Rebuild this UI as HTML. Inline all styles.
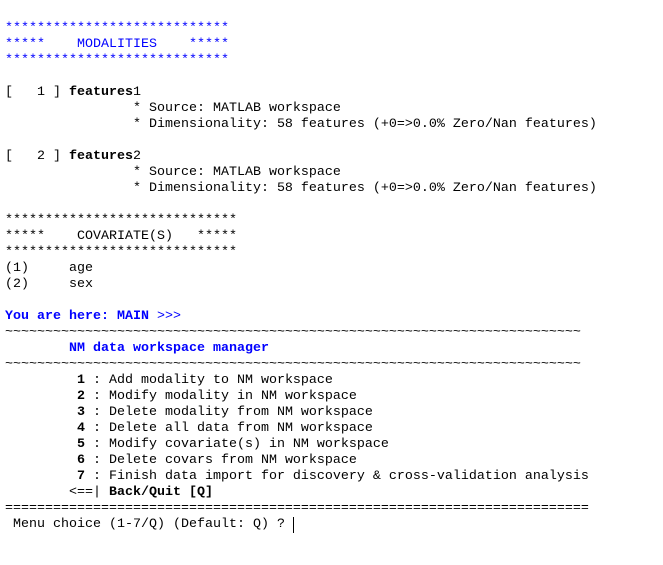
<!DOCTYPE html>
<html><head><style>
body{margin:0;background:#fff;width:663px;height:565px;overflow:hidden}
pre{position:absolute;left:5px;top:21px;margin:0;font-family:"Liberation Mono",monospace;font-size:13.33px;line-height:16px;color:#000}
.b{color:#00f}
b{font-weight:bold}
.cur{display:inline-block;width:1px;height:16px;background:#000;vertical-align:top}
</style></head><body>
<pre><span class="b">****************************
*****    MODALITIES    *****
****************************</span>

[   1 ] <b>features</b>1
                * Source: MATLAB workspace
                * Dimensionality: 58 features (+0=&gt;0.0% Zero/Nan features)

[   2 ] <b>features</b>2
                * Source: MATLAB workspace
                * Dimensionality: 58 features (+0=&gt;0.0% Zero/Nan features)

*****************************
*****    COVARIATE(S)   *****
*****************************
(1)     age
(2)     sex

<span class="b"><b>You are here: MAIN</b> &gt;&gt;&gt;</span>
~~~~~~~~~~~~~~~~~~~~~~~~~~~~~~~~~~~~~~~~~~~~~~~~~~~~~~~~~~~~~~~~~~~~~~~~
<span class="b"><b>        NM data workspace manager</b></span>
~~~~~~~~~~~~~~~~~~~~~~~~~~~~~~~~~~~~~~~~~~~~~~~~~~~~~~~~~~~~~~~~~~~~~~~~
         <b>1</b> : Add modality to NM workspace
         <b>2</b> : Modify modality in NM workspace
         <b>3</b> : Delete modality from NM workspace
         <b>4</b> : Delete all data from NM workspace
         <b>5</b> : Modify covariate(s) in NM workspace
         <b>6</b> : Delete covars from NM workspace
         <b>7</b> : Finish data import for discovery &amp; cross-validation analysis
        &lt;==| <b>Back/Quit [Q]</b>
=========================================================================
 Menu choice (1-7/Q) (Default: Q) ? <span class="cur"></span></pre>
</body></html>
